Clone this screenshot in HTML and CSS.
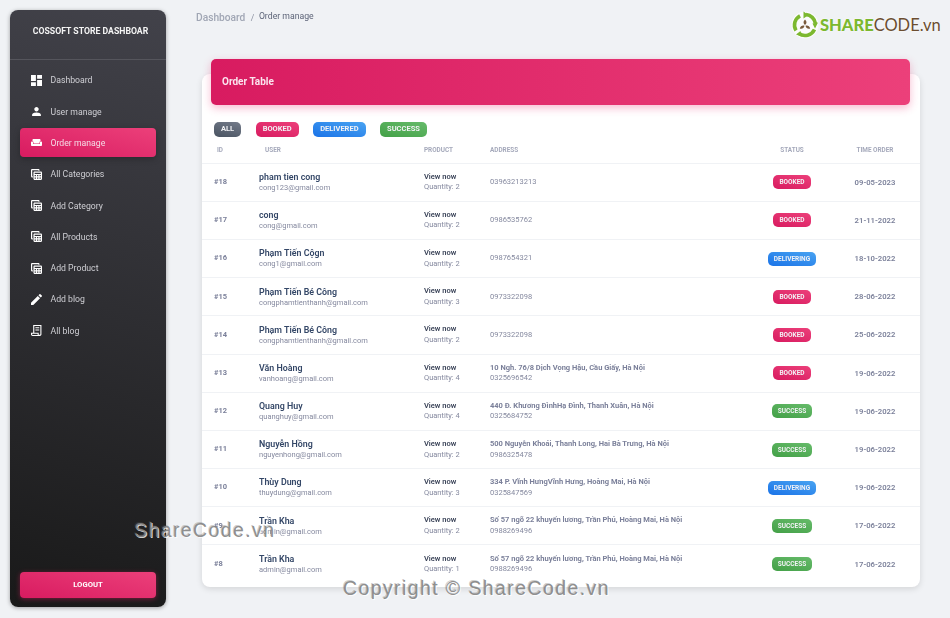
FILE: index.html
```html
<!DOCTYPE html>
<html>
<head>
    <meta charset="utf-8">
    <title>Order manage</title>
    <link rel="stylesheet" href="styles.css">
</head>
<body>
    <svg class="icon-defs" width="0" height="0">
        <symbol id="i-dashboard" viewBox="3 3 18 18"><path d="M3 13h8V3H3v10zm0 8h8v-6H3v6zm10 0h8V11h-8v10zm0-18v6h8V3h-8z"/></symbol>
        <symbol id="i-person" viewBox="2 2 20 20"><path d="M12 12c2.21 0 4-1.79 4-4s-1.79-4-4-4-4 1.79-4 4 1.79 4 4 4zm0 2c-2.67 0-8 1.34-8 4v2h16v-2c0-2.66-5.33-4-8-4z"/></symbol>
        <symbol id="i-weekend" viewBox="1 3 22 18"><path d="M21 10c-1.1 0-2 .9-2 2v3H5v-3c0-1.1-.9-2-2-2s-2 .9-2 2v5c0 1.1.9 2 2 2h18c1.1 0 2-.9 2-2v-5c0-1.1-.9-2-2-2zm-3-5H6c-1.1 0-2 .9-2 2v2.15c1.16.41 2 1.52 2 2.81V14h12v-2.03c0-1.3.84-2.4 2-2.81V7c0-1.1-.9-2-2-2z"/></symbol>
        <symbol id="i-table" viewBox="3 3 18 18"><path d="M19 7H9c-1.1 0-2 .9-2 2v10c0 1.1.9 2 2 2h10c1.1 0 2-.9 2-2V9c0-1.1-.9-2-2-2zm0 2v2H9V9h10zm-6 6v-2h2v2h-2zm2 2v2h-2v-2h2zm-4-2H9v-2h2v2zm6-2h2v2h-2v-2zm-8 4h2v2H9v-2zm8 2v-2h2v2h-2zM6 17H5c-1.1 0-2-.9-2-2V5c0-1.1.9-2 2-2h10c1.1 0 2 .9 2 2v1h-2V5H5v10h1v2z"/></symbol>
        <symbol id="i-edit" viewBox="3 3 18 18"><path d="M3 17.25V21h3.75L17.81 9.94l-3.75-3.75L3 17.25zM20.71 7.04c.39-.39.39-1.02 0-1.41l-2.34-2.34c-.39-.39-1.02-.39-1.41 0l-1.83 1.83 3.75 3.75 1.83-1.83z"/></symbol>
        <symbol id="i-blog" viewBox="2 2 20 20"><path d="M6 2h15v17c0 1.7-1.3 3-3 3H5c-1.7 0-3-1.300-3-3v-3h4V2zm2 2v12h8v3c0 .6.4 1 1 1s2-.4 2-1V4H8zm2 2h7v2h-7V6zm0 4h7v2h-7v-2zM4 18v1c0 .6.4 1 1 1h9.200c-.1-.3-.2-.7-.2-1v-1H4z"/></symbol>
    </svg>

    <div class="app">
        <aside class="sidebar">
            <div class="brand">COSSOFT STORE DASHBOAR</div>
            <nav class="nav">
                <a class="nav-item"><svg class="nav-icon"><use href="#i-dashboard"/></svg>Dashboard</a>
                <a class="nav-item"><svg class="nav-icon"><use href="#i-person"/></svg>User manage</a>
                <a class="nav-item active"><svg class="nav-icon"><use href="#i-weekend"/></svg>Order manage</a>
                <a class="nav-item"><svg class="nav-icon"><use href="#i-table"/></svg>All Categories</a>
                <a class="nav-item"><svg class="nav-icon"><use href="#i-table"/></svg>Add Category</a>
                <a class="nav-item"><svg class="nav-icon"><use href="#i-table"/></svg>All Products</a>
                <a class="nav-item"><svg class="nav-icon"><use href="#i-table"/></svg>Add Product</a>
                <a class="nav-item"><svg class="nav-icon"><use href="#i-edit"/></svg>Add blog</a>
                <a class="nav-item"><svg class="nav-icon"><use href="#i-blog"/></svg>All blog</a>
            </nav>
            <button class="logout">LOGOUT</button>
        </aside>

        <main class="main">
            <div class="breadcrumb">
                <span class="crumb-root">Dashboard</span>
                <span class="crumb-sep">/</span>
                <span class="crumb-current">Order manage</span>
            </div>

            <section class="card">
                <header class="card-header">Order Table</header>
                <div class="filters">
                    <span class="pill pill-all">ALL</span>
                    <span class="pill pill-booked">BOOKED</span>
                    <span class="pill pill-delivered">DELIVERED</span>
                    <span class="pill pill-success">SUCCESS</span>
                </div>

                <table class="orders">
                    <thead>
                        <tr>
                            <th class="col-id">ID</th>
                            <th class="col-user">USER</th>
                            <th class="col-product">PRODUCT</th>
                            <th class="col-address">ADDRESS</th>
                            <th class="col-status">STATUS</th>
                            <th class="col-time">TIME ORDER</th>
                        </tr>
                    </thead>
                    <tbody>
                        <tr>
                            <td class="order-id">#18</td>
                            <td><div class="name">pham tien cong</div><div class="sub">cong123@gmail.com</div></td>
                            <td><div class="view">View now</div><div class="sub">Quantity: 2</div></td>
                            <td><div class="sub">03963213213</div></td>
                            <td class="center"><span class="badge badge-booked">BOOKED</span></td>
                            <td class="center date">09-05-2023</td>
                        </tr>
                        <tr>
                            <td class="order-id">#17</td>
                            <td><div class="name">cong</div><div class="sub">cong@gmail.com</div></td>
                            <td><div class="view">View now</div><div class="sub">Quantity: 2</div></td>
                            <td><div class="sub">0986535762</div></td>
                            <td class="center"><span class="badge badge-booked">BOOKED</span></td>
                            <td class="center date">21-11-2022</td>
                        </tr>
                        <tr>
                            <td class="order-id">#16</td>
                            <td><div class="name">Phạm Tiến Cộgn</div><div class="sub">cong1@gmail.com</div></td>
                            <td><div class="view">View now</div><div class="sub">Quantity: 2</div></td>
                            <td><div class="sub">0987654321</div></td>
                            <td class="center"><span class="badge badge-delivering">DELIVERING</span></td>
                            <td class="center date">18-10-2022</td>
                        </tr>
                        <tr>
                            <td class="order-id">#15</td>
                            <td><div class="name">Phạm Tiến Bé Công</div><div class="sub">congphamtienthanh@gmail.com</div></td>
                            <td><div class="view">View now</div><div class="sub">Quantity: 3</div></td>
                            <td><div class="sub">0973322098</div></td>
                            <td class="center"><span class="badge badge-booked">BOOKED</span></td>
                            <td class="center date">28-06-2022</td>
                        </tr>
                        <tr>
                            <td class="order-id">#14</td>
                            <td><div class="name">Phạm Tiến Bé Công</div><div class="sub">congphamtienthanh@gmail.com</div></td>
                            <td><div class="view">View now</div><div class="sub">Quantity: 2</div></td>
                            <td><div class="sub">0973322098</div></td>
                            <td class="center"><span class="badge badge-booked">BOOKED</span></td>
                            <td class="center date">25-06-2022</td>
                        </tr>
                        <tr>
                            <td class="order-id">#13</td>
                            <td><div class="name">Văn Hoàng</div><div class="sub">vanhoang@gmail.com</div></td>
                            <td><div class="view">View now</div><div class="sub">Quantity: 4</div></td>
                            <td><div class="addr">10 Ngh. 76/8 Dịch Vọng Hậu, Cầu Giấy, Hà Nội</div><div class="sub">0325696542</div></td>
                            <td class="center"><span class="badge badge-booked">BOOKED</span></td>
                            <td class="center date">19-06-2022</td>
                        </tr>
                        <tr>
                            <td class="order-id">#12</td>
                            <td><div class="name">Quang Huy</div><div class="sub">quanghuy@gmail.com</div></td>
                            <td><div class="view">View now</div><div class="sub">Quantity: 4</div></td>
                            <td><div class="addr">440 Đ. Khương ĐìnhHạ Đình, Thanh Xuân, Hà Nội</div><div class="sub">0325684752</div></td>
                            <td class="center"><span class="badge badge-success">SUCCESS</span></td>
                            <td class="center date">19-06-2022</td>
                        </tr>
                        <tr>
                            <td class="order-id">#11</td>
                            <td><div class="name">Nguyễn Hồng</div><div class="sub">nguyenhong@gmail.com</div></td>
                            <td><div class="view">View now</div><div class="sub">Quantity: 2</div></td>
                            <td><div class="addr">500 Nguyễn Khoái, Thanh Long, Hai Bà Trưng, Hà Nội</div><div class="sub">0986325478</div></td>
                            <td class="center"><span class="badge badge-success">SUCCESS</span></td>
                            <td class="center date">19-06-2022</td>
                        </tr>
                        <tr>
                            <td class="order-id">#10</td>
                            <td><div class="name">Thùy Dung</div><div class="sub">thuydung@gmail.com</div></td>
                            <td><div class="view">View now</div><div class="sub">Quantity: 3</div></td>
                            <td><div class="addr">334 P. Vĩnh HưngVĩnh Hưng, Hoàng Mai, Hà Nội</div><div class="sub">0325847569</div></td>
                            <td class="center"><span class="badge badge-delivering">DELIVERING</span></td>
                            <td class="center date">19-06-2022</td>
                        </tr>
                        <tr>
                            <td class="order-id">#9</td>
                            <td><div class="name">Trần Kha</div><div class="sub">admin@gmail.com</div></td>
                            <td><div class="view">View now</div><div class="sub">Quantity: 2</div></td>
                            <td><div class="addr">Số 57 ngõ 22 khuyến lương, Trần Phú, Hoàng Mai, Hà Nội</div><div class="sub">0988269496</div></td>
                            <td class="center"><span class="badge badge-success">SUCCESS</span></td>
                            <td class="center date">17-06-2022</td>
                        </tr>
                        <tr>
                            <td class="order-id">#8</td>
                            <td><div class="name">Trần Kha</div><div class="sub">admin@gmail.com</div></td>
                            <td><div class="view">View now</div><div class="sub">Quantity: 1</div></td>
                            <td><div class="addr">Số 57 ngõ 22 khuyến lương, Trần Phú, Hoàng Mai, Hà Nội</div><div class="sub">0988269496</div></td>
                            <td class="center"><span class="badge badge-success">SUCCESS</span></td>
                            <td class="center date">17-06-2022</td>
                        </tr>
                    </tbody>
                </table>
            </section>
        </main>
    </div>

    <!-- watermarks lying over the page -->
    <div class="logo">
        <svg class="logo-mark" viewBox="0 0 28 28">
            <circle class="logo-halo" cx="14" cy="14" r="13.5"/>
            <path class="logo-ring" d="M15 3.500A10.500 10.500 0 0 1 24.400 12.500M23.500 18.500A10.500 10.500 0 0 1 8 22.600M5 19.500A10.500 10.500 0 0 1 9 4.800"/>
            <path class="logo-tip" d="M12.500 0.500l5 3.500-5 3.500zM27 11.500l-5.500 1 2.500 5zM5 23.500l5.500 2-1-5.500z"/>
            <path class="logo-leaf" d="M14 8.500c2 1.800 2 4 0 5.500-2-1.500-2-3.700 0-5.500zM8.800 17.500c.6-2.500 2.600-3.500 4.700-2.800-.4 2.300-2.400 3.500-4.700 2.800zM19.200 17.500c-2.300.7-4.300-.5-4.700-2.800 2.100-.7 4.100.3 4.700 2.800z"/>
        </svg>
        <span class="logo-text"><b>SHARE</b>CODE.vn</span>
    </div>
    <div class="mark mark-left">ShareCode.vn</div>
    <div class="mark mark-bottom">Copyright © ShareCode.vn</div>
</body>
</html>
```

FILE: styles.css
```css
* {
    box-sizing: border-box;
}

body {
    margin: 0;
    height: 618px;
    overflow: hidden;
    background: #f0f2f5;
    font-family: Roboto, "Noto Sans", sans-serif;
    color: #344767;
}

.icon-defs {
    display: block;
    height: 0;
}

/* the whole shot is a little soft */
.app {
    display: flex;
    padding: 10px 30px 0 10px;
    filter: blur(0.35px);
}

/* sidebar */
.sidebar {
    display: flex;
    flex-direction: column;
    flex: none;
    width: 156px;
    height: 597px;
    padding: 0 10px;
    border-radius: 8px;
    background: linear-gradient(195deg, #42424a, #191919);
    box-shadow: 0 1px 4px rgba(0,0,0,0.35);
}

.brand {
    margin: 0 -10px;
    height: 50px;
    padding: 16px 0 0 5px;
    border-bottom: 1px solid #55555c;
    font-size: 8.700px;
    font-weight: 700;
    line-height: 11px;
    text-align: center;
    color: #f4f4f4;
}

.nav {
    display: flex;
    flex-direction: column;
    gap: 2.300px;
    margin-top: 5.900px;
}

.nav-item {
    display: flex;
    align-items: center;
    height: 29px;
    padding-left: 11px;
    border-radius: 4px;
    font-size: 8.700px;
    color: #cfcfd4;
}

.nav-item.active {
    background: linear-gradient(195deg, #ec407a, #d81b60);
    color: #f5dbe6;
    box-shadow: 0 2px 6px rgba(0,0,0,0.25);
}

.nav-icon {
    flex: none;
    width: 11px;
    height: 11px;
    margin-right: 8.500px;
    fill: #fff;
}

.logout {
    margin-top: auto;
    margin-bottom: 9px;
    height: 26px;
    padding: 0 0 2px;
    border: 0;
    border-radius: 4px;
    background: linear-gradient(195deg, #ec407a, #d81b60);
    box-shadow: 0 1px 5px rgba(233,30,99,0.45);
    font-family: inherit;
    font-size: 7.700px;
    font-weight: 700;
    color: #fff;
}

/* main area */
.main {
    flex: 1;
    margin-left: 30px;
    min-width: 0;
}

.breadcrumb {
    display: flex;
    align-items: baseline;
    height: 49px;
    padding-top: 2px;
    font-size: 8.700px;
    line-height: 11px;
}

.crumb-root {
    font-size: 10.200px;
    font-weight: 500;
    color: #a0a6b4;
}

.crumb-sep {
    margin: 0 5.500px;
    color: #8a90a0;
}

.crumb-current {
    position: relative;
    top: -2px;
    left: -1px;
    color: #5d6478;
}

.card {
    margin: 15px 0 0 6px;
    height: 513px;
    padding-top: 0.100px;
    border-radius: 8px;
    background: #fff;
    box-shadow: 0 2px 6px rgba(0,0,0,0.12);
}

.card-header {
    display: flex;
    align-items: center;
    height: 46px;
    margin: -15px 10px 0 9px;
    padding: 0 0 2px 11px;
    border-radius: 5px;
    background: linear-gradient(90deg, #d81b60, #ec407a);
    box-shadow: 0 3px 8px rgba(233,30,99,0.3);
    font-size: 10px;
    font-weight: 700;
    color: #fbe4ee;
}

.filters {
    display: flex;
    gap: 14.500px;
    margin: 17px 0 0 12px;
}

.pill {
    height: 15px;
    padding: 0 7px;
    border-radius: 5px;
    font-size: 7.500px;
    font-weight: 700;
    line-height: 14px;
    color: #f2f2f5;
}

.pill-all { background: linear-gradient(195deg, #747b8a, #495361); }
.pill-booked { background: linear-gradient(195deg, #ec407a, #d81b60); }
.pill-delivered { background: linear-gradient(195deg, #49a3f1, #1a73e8); }
.pill-success { background: linear-gradient(195deg, #66bb6a, #43a047); }

/* table */
.orders {
    width: 100%;
    table-layout: fixed;
    border-collapse: collapse;
}

.orders th {
    height: 26px;
    padding: 0 0 0 12px;
    border-bottom: 1px solid #f0f2f5;
    font-size: 6.400px;
    font-weight: 700;
    text-align: left;
    color: #a5a9bb;
}

.orders td {
    height: 38.200px;
    padding: 0 0 0 12px;
    border-bottom: 1px solid #f0f2f5;
    font-size: 7.500px;
    line-height: 10.500px;
}

.orders tbody tr:last-child td {
    border-bottom: 0;
}

.orders .col-id { width: 45px; padding-left: 15px; }
.orders .col-user { width: 165px; padding-left: 18px; }
.orders .col-product { width: 66px; }
.orders .col-address { width: 276px; }
.orders .col-status { width: 76px; padding-left: 0; text-align: center; }
.orders .col-time { width: 90px; padding-left: 0; text-align: center; }

.orders .center {
    padding-left: 0;
    text-align: center;
}

.order-id {
    font-weight: 700;
    color: #7b809a;
}

.name {
    font-size: 8.850px;
    font-weight: 600;
    line-height: 12px;
    color: #344767;
}

.view {
    font-weight: 600;
    color: #3a4358;
}

.sub {
    color: #85899f;
}

.addr {
    font-weight: 700;
    color: #7b809a;
}

.orders .date {
    padding-top: 1.500px;
    font-weight: 600;
    font-size: 7.700px;
    color: #7b809a;
}

.badge {
    display: inline-block;
    height: 14px;
    padding: 0 6px;
    border-radius: 5px;
    font-size: 6.500px;
    font-weight: 700;
    line-height: 14px;
    vertical-align: middle;
    color: #f2f2f5;
}

.badge-booked { background: linear-gradient(195deg, #ec407a, #d81b60); }
.badge-delivering { background: linear-gradient(195deg, #49a3f1, #1a73e8); }
.badge-success { background: linear-gradient(195deg, #66bb6a, #43a047); }

/* watermarks */
.logo {
    position: absolute;
    top: 11px;
    left: 791px;
    display: flex;
    align-items: center;
}

.logo-mark {
    width: 28px;
    height: 28px;
}

.logo-halo { fill: #fff; opacity: 0.7; }
.logo-ring { fill: none; stroke: #7cb82f; stroke-width: 3.600; }
.logo-tip { fill: #7cb82f; }
.logo-leaf { fill: #7a5a3c; }

.logo-text {
    margin-left: 1px;
    font-family: Lato, sans-serif;
    font-size: 16.500px;
    color: #6b4d30;
    text-shadow: 0 0 2px #fff;
}

.logo-text b {
    font-weight: 900;
    color: #7cb82f;
}

.mark {
    position: absolute;
    font-family: "Liberation Sans", sans-serif;
    font-size: 19.500px;
    letter-spacing: 1.400px;
    white-space: nowrap;
    color: rgba(130,130,130,0.9);
    text-shadow: 1px 1px 0 rgba(255,255,255,0.8), -1px -1px 0 rgba(90,90,90,0.3);
}

.mark-left {
    top: 519px;
    left: 134px;
}

.mark-bottom {
    top: 577px;
    left: 343px;
}
```
